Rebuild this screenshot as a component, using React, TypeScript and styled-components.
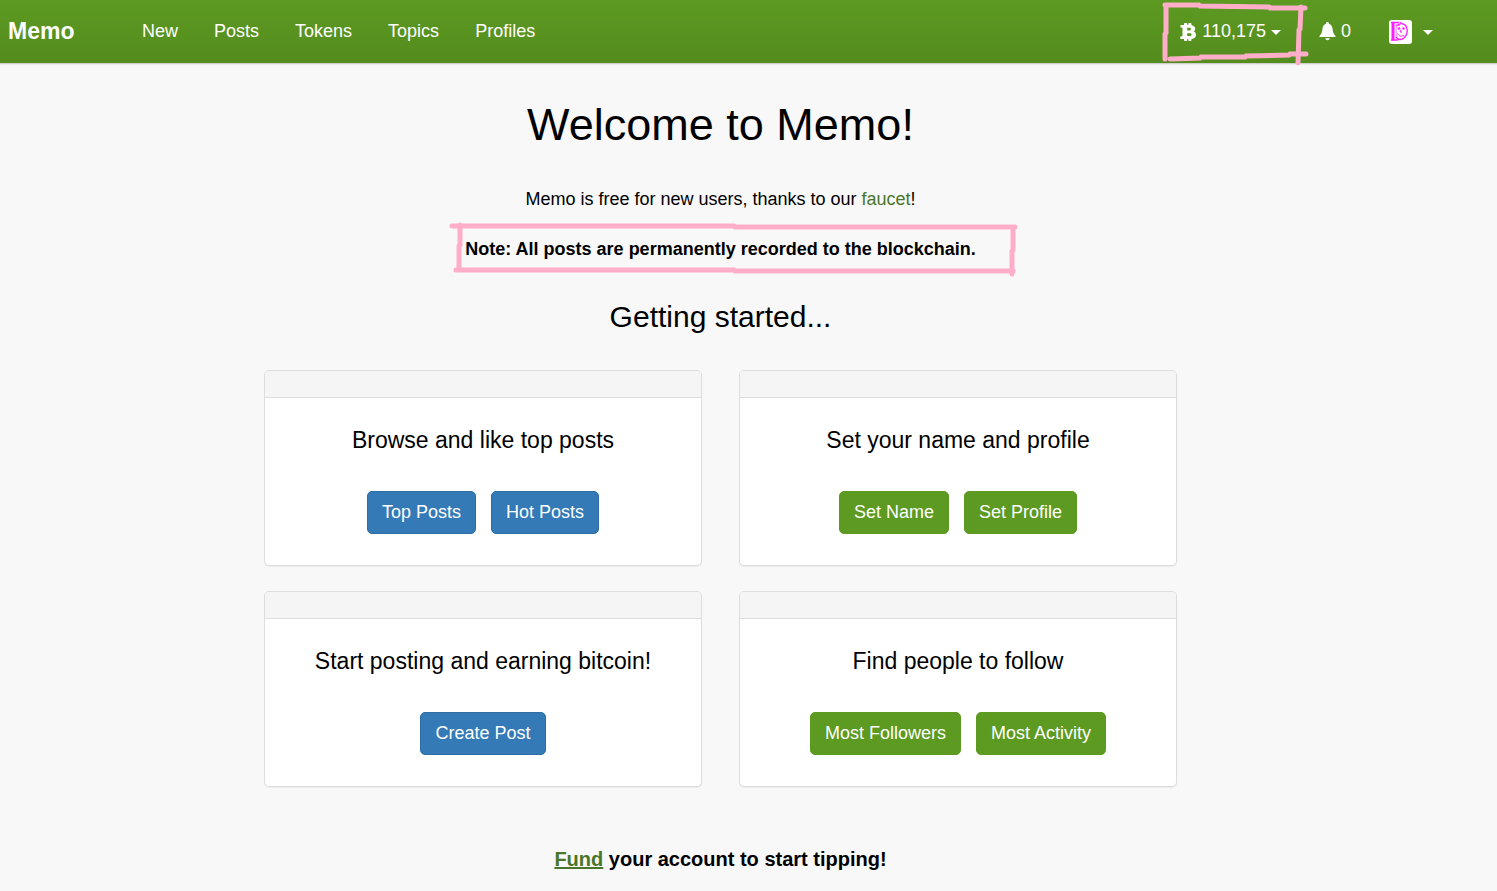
import React from "react";
import styled, { createGlobalStyle } from "styled-components";

const GlobalStyle = createGlobalStyle`
  *, *::before, *::after { box-sizing: border-box; }
  body {
    margin: 0;
    background: #f8f8f8;
    color: #000;
    font-family: "Liberation Sans", Arial, Helvetica, sans-serif;
    font-size: 18px;
    line-height: 25px;
  }
`;

const green = "#5c9a21";
const linkGreen = "#497629";
const markerPink = "#ffaec9";

const Navbar = styled.header`
  display: flex;
  align-items: center;
  height: 64px;
  padding: 0 64px 0 8px;
  background: linear-gradient(#5c9a21, #548c1e);
  border-bottom: 1px solid #cfcfcf;
  box-shadow: 0 1px 1px #ececec;
`;

const Brand = styled.a`
  width: 134px;
  color: #fff;
  font-size: 23px;
  font-weight: 700;
  text-decoration: none;
`;

const NavLinks = styled.nav`
  display: flex;
  flex: 1;
  gap: 36px;
`;

const NavLink = styled.a`
  color: #fff;
  text-decoration: none;
`;

const NavTools = styled.div`
  display: flex;
  align-items: center;
`;

const NavButton = styled.button<{ $gap: number }>`
  position: relative;
  display: flex;
  align-items: center;
  gap: ${(p) => p.$gap}px;
  margin: 0 0 0 38px;
  padding: 0;
  border: 0;
  background: none;
  color: #fff;
  font: inherit;
  line-height: 25px;
  cursor: pointer;
`;

const Caret = styled.span`
  margin-top: 2px;
  border: 5px solid transparent;
  border-top-color: #fff;
  border-bottom: 0;
`;

const Marker = styled.svg<{ $left: number; $top: number }>`
  position: absolute;
  left: ${(p) => p.$left}px;
  top: ${(p) => p.$top}px;
  fill: none;
  stroke: ${markerPink};
  stroke-width: 5;
  stroke-linecap: round;
  pointer-events: none;
`;

const Page = styled.main`
  display: flex;
  flex-direction: column;
  align-items: center;
  padding: 36px 56px 19px 0;
  text-align: center;
`;

const Title = styled.h1`
  margin: 0 0 37px;
  font-size: 45px;
  font-weight: 400;
  line-height: 50px;
`;

const Text = styled.p`
  margin: 0 0 25px;
`;

const Note = styled.strong`
  position: relative;
  display: inline-block;
`;

const TextLink = styled.a<{ $underlined?: boolean }>`
  color: ${linkGreen};
  text-decoration: ${(p) => (p.$underlined ? "underline" : "none")};
`;

const Subtitle = styled.h2`
  margin: 12px 0 36px;
  font-size: 30px;
  font-weight: 400;
  line-height: 35px;
`;

const Cards = styled.div`
  display: grid;
  grid-template-columns: 1fr 1fr;
  gap: 25px 37px;
  width: 100%;
  max-width: 913px;
`;

const Card = styled.section`
  border: 1px solid #ddd;
  border-radius: 5px;
  background: #fff;
  box-shadow: 0 1px 1px rgba(0, 0, 0, 0.05);
  overflow: hidden;
`;

const CardHeader = styled.div`
  height: 27px;
  border-bottom: 1px solid #ddd;
  background: #f5f5f5;
`;

const CardBody = styled.div`
  padding: 30px 18px 31px;
`;

const CardTitle = styled.h3`
  margin: 0 0 38px;
  font-size: 23px;
  font-weight: 400;
  line-height: 25px;
`;

const Actions = styled.div`
  display: flex;
  justify-content: center;
  gap: 15px;
`;

const Button = styled.button<{ $tone: "blue" | "green" }>`
  height: 43px;
  padding: 0 14px;
  border: 1px solid ${(p) => (p.$tone === "blue" ? "#2e6da4" : green)};
  border-radius: 5px;
  background: ${(p) => (p.$tone === "blue" ? "#337ab7" : green)};
  color: #fff;
  font: inherit;
  cursor: pointer;
`;

const Footer = styled.p`
  margin: 60px 0 0;
  font-size: 20px;
  font-weight: 700;
`;

const BitcoinIcon = () => (
  <svg width="17" height="18" viewBox="0 0 17 18" fill="#fff" aria-hidden="true">
    <path
      fillRule="evenodd"
      d="M.5 2H4V1.200Q4 0 5 0h1.300q1 0 1 1v1h1V1q0-1 1-1h1.200q1 0 1 1v1.300c2.300.4 3.700 1.600 3.700 3.400 0 1.400-.7 2.400-1.700 2.900 1.700.6 2.500 1.800 2.500 3.400 0 2.300-1.700 3.600-4.500 3.900V17q0 1-1 1H9.300q-1 0-1-1v-1h-1v1q0 1-1 1H5q-1 0-1-1v-1H.3v-2.500h1.500q.7 0 .7-.7V5.300q0-.8-.8-.8H.5V2zm6.700 2.800v2.600h2.200c.9 0 1.500-.5 1.500-1.300s-.6-1.300-1.500-1.300H7.200zm0 5.400v2.900h2.700c1 0 1.700-.6 1.700-1.500s-.7-1.400-1.700-1.400H7.200z"
    />
  </svg>
);

const BellIcon = () => (
  <svg width="17" height="19" viewBox="0 0 17 19" fill="#fff" aria-hidden="true">
    <path d="M8.500 0c.9 0 1.400.6 1.400 1.500v.3c2.100.6 3.300 2.400 3.600 4.700.4 3.500.7 5.200 2.600 6.900.8.700.6 1.600-.5 1.600H1.400c-1.100 0-1.300-.9-.5-1.600 1.900-1.700 2.200-3.400 2.600-6.900.3-2.300 1.500-4.100 3.600-4.700v-.3C7.100.6 7.600 0 8.500 0z" />
    <path d="M6.200 16.200h4.600c-.3 1.200-1.100 2-2.300 2s-2-.8-2.300-2z" />
  </svg>
);

const Avatar = () => (
  <svg width="23" height="24" viewBox="0 0 23 24" aria-hidden="true">
    <rect width="23" height="24" rx="3" fill="#fff" />
    <g fill="none" stroke="#ff1cff">
      <path d="M4 2v18.500" strokeWidth="3" />
      <path d="M2 2.500h8M2 20h7" strokeWidth="1.500" />
      <path d="M7.200 4v14" strokeWidth="1" strokeOpacity="0.6" />
      <path d="M7.500 6c2-3 7.500-3.500 9.800.5 1.800 4 .7 9-2.300 11.500-3 2.300-6 1.500-8-1" strokeWidth="1.300" />
      <path d="M8.500 13.500c1.500 3 4 3.500 6.500 1.500M12 9.500l-1 2.500h2M9 5.500l2-1M11 2l2 1.500" strokeWidth="1" />
    </g>
    <g fill="#ff1cff">
      <circle cx="10" cy="8.500" r="1.200" />
      <circle cx="14.500" cy="8.500" r="1.200" />
    </g>
  </svg>
);

const navItems = ["New", "Posts", "Tokens", "Topics", "Profiles"];

const cards: { title: string; tone: "blue" | "green"; actions: string[] }[] = [
  { title: "Browse and like top posts", tone: "blue", actions: ["Top Posts", "Hot Posts"] },
  { title: "Set your name and profile", tone: "green", actions: ["Set Name", "Set Profile"] },
  { title: "Start posting and earning bitcoin!", tone: "blue", actions: ["Create Post"] },
  { title: "Find people to follow", tone: "green", actions: ["Most Followers", "Most Activity"] },
];

export default function App() {
  return (
    <>
      <GlobalStyle />
      <Navbar>
        <Brand href="#">Memo</Brand>
        <NavLinks>
          {navItems.map((item) => (
            <NavLink href="#" key={item}>
              {item}
            </NavLink>
          ))}
        </NavLinks>
        <NavTools>
          <NavButton $gap={5}>
            <BitcoinIcon />
            110,175
            <Caret />
            <Marker $left={-18} $top={-17} width="148" height="64" viewBox="0 0 148 64">
              <path d="M3 3h34l1 1 69 1 1 1h35M4 3v28l-1 1v25M8 57l30-1 1-1h44l1-1 43-1 1-1h16M139 5l-1 22-1 1-1 33" />
            </Marker>
          </NavButton>
          <NavButton $gap={5} aria-label="Notifications 0">
            <BellIcon />0
          </NavButton>
          <NavButton $gap={11} aria-label="Account menu">
            <Avatar />
            <Caret />
          </NavButton>
        </NavTools>
      </Navbar>
      <Page>
        <Title>Welcome to Memo!</Title>
        <Text>
          Memo is free for new users, thanks to our <TextLink href="#">faucet</TextLink>!
        </Text>
        <Text>
          <Note>
            Note: All posts are permanently recorded to the blockchain.
            <Marker $left={-16} $top={-15} width="570" height="56" viewBox="0 0 570 56">
              <path d="M3 4h282l1 1h280M11 3v20l-1 1v24M7 48h278l1 1h278M564 6v22l-1 1v23" />
            </Marker>
          </Note>
        </Text>
        <Subtitle>Getting started...</Subtitle>
        <Cards>
          {cards.map((card) => (
            <Card key={card.title}>
              <CardHeader />
              <CardBody>
                <CardTitle>{card.title}</CardTitle>
                <Actions>
                  {card.actions.map((action) => (
                    <Button $tone={card.tone} key={action}>
                      {action}
                    </Button>
                  ))}
                </Actions>
              </CardBody>
            </Card>
          ))}
        </Cards>
        <Footer>
          <TextLink href="#" $underlined>
            Fund
          </TextLink>{" "}
          your account to start tipping!
        </Footer>
      </Page>
    </>
  );
}
